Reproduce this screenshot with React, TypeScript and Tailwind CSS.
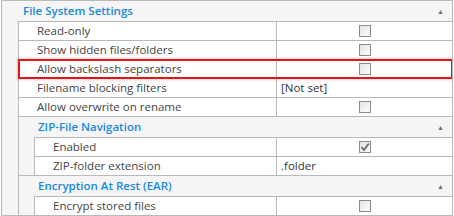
import React from "react";

const ff = { fontFamily: '"Open Sans", "Noto Sans", sans-serif' };

function Check({ checked }: { checked?: boolean }) {
  return (
    <div className="w-[12px] h-[12px] border border-[#8c8c8c] bg-gradient-to-br from-[#e4e4e4] to-[#fbfbfb] flex items-center justify-center">
      {checked && (
        <svg width="10" height="10" viewBox="0 0 10 10">
          <path d="M1.5 5 L4 8 L8.8 1.5" fill="none" stroke="#6b6b6b" strokeWidth="1.8" />
        </svg>
      )}
    </div>
  );
}

function Header({ title, pl }: { title: string; pl: string }) {
  return (
    <div className={`h-[20px] flex items-center justify-between ${pl} pr-[8px] bg-[#f5f5f5]`}>
      <span className="text-[11.5px] font-semibold text-[#1a88dc]">{title}</span>
      <span className="text-[7px] text-[#6e6e6e] leading-none">▲</span>
    </div>
  );
}

function Row({
  label,
  value,
  check,
  checked,
  highlight,
}: {
  label: string;
  value?: string;
  check?: boolean;
  checked?: boolean;
  highlight?: boolean;
}) {
  return (
    <div className="relative h-[19px] flex border-t border-l border-[#b9b9b9] bg-white">
      <div className="flex-1 flex items-center pl-[18px] text-[11.5px] text-[#444]">{label}</div>
      <div className="w-[176px] flex items-center border-l border-[#b9b9b9]">
        {check ? (
          <div className="flex-1 flex justify-center">
            <Check checked={checked} />
          </div>
        ) : (
          <span className="pl-[4px] text-[11.5px] text-[#333]">{value}</span>
        )}
      </div>
      {highlight && (
        <div className="absolute z-10 -top-px -left-px right-[-1px] bottom-[-1px] border-2 border-[#e6131b] shadow-[0_0_3px_rgba(0,0,0,0.3)] pointer-events-none" />
      )}
    </div>
  );
}

export default function App() {
  return (
    <div className="w-[454px] h-[216px] bg-white" style={ff}>
      <div className="ml-px w-[452px] h-[216px] border-t border-l border-r border-b border-[#b9b9b9] bg-[#f5f5f5] flex flex-col overflow-hidden">
        <Header title="File System Settings" pl="pl-[21px]" />
        <div className="pl-[16px]">
          <Row label="Read-only" check />
          <Row label="Show hidden files/folders" check />
          <Row label="Allow backslash separators" check highlight />
          <Row label="Filename blocking filters" value="[Not set]" />
          <Row label="Allow overwrite on rename" check />
          <div className="border-t border-l border-[#b9b9b9]">
            <Header title="ZIP-File Navigation" pl="pl-[19px]" />
            <div className="pl-[15px]">
              <Row label="Enabled" check checked />
              <Row label="ZIP-folder extension" value=".folder" />
            </div>
          </div>
          <div className="border-t border-l border-[#b9b9b9]">
            <Header title="Encryption At Rest (EAR)" pl="pl-[19px]" />
            <div className="pl-[15px]">
              <Row label="Encrypt stored files" check />
            </div>
          </div>
        </div>
      </div>
    </div>
  );
}
